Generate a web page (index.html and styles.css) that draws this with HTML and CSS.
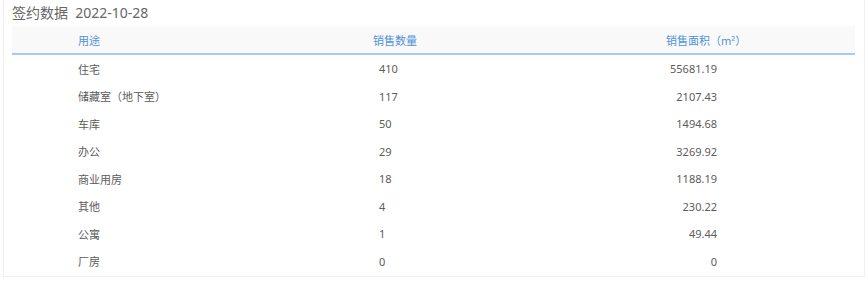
FILE: index.html
```html
<!DOCTYPE html>
<html lang="zh-CN">
<head>
<meta charset="utf-8">
<title>签约数据</title>
<link rel="stylesheet" href="styles.css">
</head>
<body>
<div class="card">
  <div class="title">签约数据&nbsp; 2022-10-28</div>
  <div class="table">
    <div class="row head">
      <div class="c1">用途</div>
      <div class="c2">销售数量</div>
      <div class="c3">销售面积（m²）</div>
    </div>
    <div class="row"><div class="c1">住宅</div><div class="c2">410</div><div class="c3">55681.19</div></div>
    <div class="row"><div class="c1">储藏室（地下室）</div><div class="c2">117</div><div class="c3">2107.43</div></div>
    <div class="row"><div class="c1">车库</div><div class="c2">50</div><div class="c3">1494.68</div></div>
    <div class="row"><div class="c1">办公</div><div class="c2">29</div><div class="c3">3269.92</div></div>
    <div class="row"><div class="c1">商业用房</div><div class="c2">18</div><div class="c3">1188.19</div></div>
    <div class="row"><div class="c1">其他</div><div class="c2">4</div><div class="c3">230.22</div></div>
    <div class="row"><div class="c1">公寓</div><div class="c2">1</div><div class="c3">49.44</div></div>
    <div class="row"><div class="c1">厂房</div><div class="c2">0</div><div class="c3">0</div></div>
  </div>
</div>
</body>
</html>
```
FILE: styles.css
```css
html, body {
  margin: 0;
  padding: 0;
  background: #ffffff;
}
body {
  font-family: "Noto Sans", "Noto Sans CJK SC", sans-serif;
  color: #666;
}
.card {
  margin: -1px 0 0 3px;
  width: 862px;
  box-sizing: border-box;
  border: 1px solid #efefef;
  padding: 0 9px 0 8px;
  height: 278px;
}
.title {
  font-size: 14px;
  line-height: 26px;
  height: 26px;
  color: #666;
}
.table {
  display: flex;
  flex-direction: column;
}
.row {
  display: grid;
  grid-template-columns: 281px 281px 281px;
  height: 27.5px;
  align-items: center;
  font-size: 11px;
  color: #5c5c5c;
}
.row.head {
  height: 27px;
  background: #f9f9f9;
  border-bottom: 2px solid #a7cbee;
  color: #4f92dc;
}
.c1 { padding-left: 66px; }
.c2 { padding-left: 86px; }
.c3 { text-align: right; padding-right: 138px; }
.head .c2 { padding-left: 80px; }
.head .c3 { text-align: left; padding-left: 92px; padding-right: 0; }
```
